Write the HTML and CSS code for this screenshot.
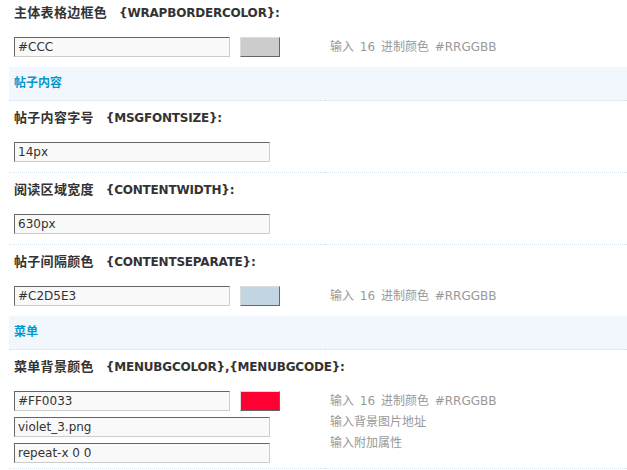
FILE: index.html
```html
<!DOCTYPE html>
<html lang="zh-CN">

<head>
    <meta charset="UTF-8">
    <title>界面风格设置</title>
    <link rel="stylesheet" href="styles.css">
</head>

<body>
    <table class="tb">
        <!-- 主体表格 -->
        <tr class="noborder first">
            <td colspan="2" class="td27"><span class="cn">主体表格边框色</span>{WRAPBORDERCOLOR}:</td>
        </tr>
        <tr class="noborder">
            <td class="rowform">
                <div class="field">
                    <input class="txt" type="text" value="#CCC">
                    <span class="swatch" style="background: #CCC;"></span>
                </div>
            </td>
            <td class="tips">输入 16 进制颜色 #RRGGBB</td>
        </tr>

        <!-- 帖子内容 -->
        <tr class="partition">
            <td colspan="2">帖子内容</td>
        </tr>
        <tr class="noborder">
            <td colspan="2" class="td27"><span class="cn">帖子内容字号</span>{MSGFONTSIZE}:</td>
        </tr>
        <tr>
            <td class="rowform"><input class="txt wide" type="text" value="14px"></td>
            <td class="tips"></td>
        </tr>
        <tr class="noborder">
            <td colspan="2" class="td27"><span class="cn">阅读区域宽度</span>{CONTENTWIDTH}:</td>
        </tr>
        <tr>
            <td class="rowform"><input class="txt wide" type="text" value="630px"></td>
            <td class="tips"></td>
        </tr>
        <tr class="noborder">
            <td colspan="2" class="td27"><span class="cn">帖子间隔颜色</span>{CONTENTSEPARATE}:</td>
        </tr>
        <tr class="noborder">
            <td class="rowform">
                <div class="field">
                    <input class="txt" type="text" value="#C2D5E3">
                    <span class="swatch" style="background: #C2D5E3;"></span>
                </div>
            </td>
            <td class="tips">输入 16 进制颜色 #RRGGBB</td>
        </tr>

        <!-- 菜单 -->
        <tr class="partition">
            <td colspan="2">菜单</td>
        </tr>
        <tr class="noborder">
            <td colspan="2" class="td27"><span class="cn">菜单背景颜色</span>{MENUBGCOLOR},{MENUBGCODE}:</td>
        </tr>
        <tr>
            <td class="rowform last">
                <div class="stack">
                    <div class="field">
                        <input class="txt" type="text" value="#FF0033">
                        <span class="swatch" style="background: #FF0033;"></span>
                    </div>
                    <input class="txt wide" type="text" value="violet_3.png">
                    <input class="txt wide" type="text" value="repeat-x 0 0">
                </div>
            </td>
            <td class="tips">输入 16 进制颜色 #RRGGBB<br>输入背景图片地址<br>输入附加属性</td>
        </tr>
    </table>
</body>

</html>
```

FILE: styles.css
```css
body {
    margin: 0 0 0 9px;
    background: #fff;
    color: #333;
    font: 12px/15px "DejaVu Sans", Verdana, "Noto Sans CJK SC", sans-serif;
}

.tb {
    width: 100%;
    border-collapse: collapse;
}

.tb tr {
    border-bottom: 1px dotted #d3e3ee;
}

.tb tr.noborder {
    border-bottom: none;
}

.tb td {
    padding: 0 5px;
    vertical-align: top;
}

/* 标题行 */
.td27 {
    height: 15px;
    font-weight: bold;
    letter-spacing: -0.2px;
}

.td27 .cn {
    font-size: 13px;
    line-height: 12px;
    letter-spacing: 0.3px;
    margin-right: 12px;
}

.tb td.td27 {
    padding: 10px 5px 8px;
}

.tb .first td.td27 {
    padding-top: 6px;
}

/* 分区 */
.tb .partition td {
    padding: 9px 5px;
    background: #f1f7fc;
    color: #09c;
    font-weight: bold;
}

.tb td.rowform {
    width: 306px;
    padding: 8px 5px 10px;
}

.tb td.rowform.last {
    padding-bottom: 5px;
}

.tb td.tips {
    padding: 8px 5px 0;
    line-height: 21px;
    color: #999;
    word-spacing: 2px;
}

.field {
    display: flex;
    gap: 10px;
}

.stack {
    display: flex;
    flex-direction: column;
    gap: 6px;
}

.txt {
    display: block;
    box-sizing: border-box;
    width: 216px;
    height: 20px;
    margin: 0;
    padding: 0 3px;
    border: 1px solid;
    border-color: #666 #ccc #ccc #666;
    background: #f9f9f9;
    color: #333;
    font: 12px "DejaVu Sans", Verdana, sans-serif;
}

.txt.wide {
    width: 256px;
}

.swatch {
    box-sizing: border-box;
    width: 40px;
    height: 20px;
    border: 1px solid;
    border-color: #ddd #666 #666 #ddd;
}
```
